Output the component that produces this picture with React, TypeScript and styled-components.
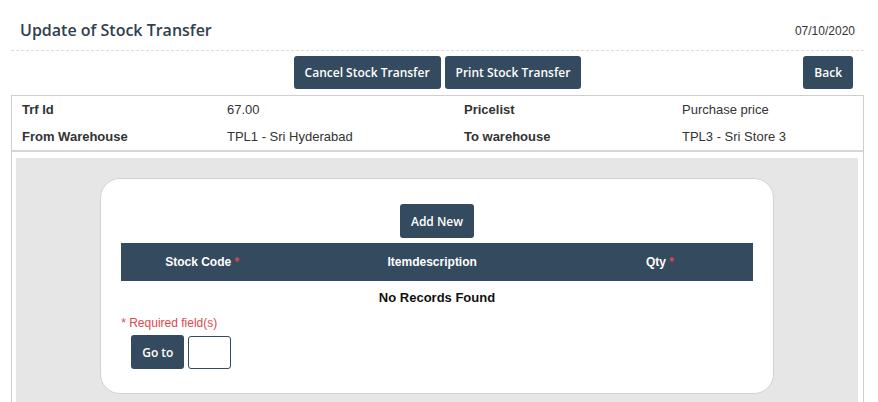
import React from "react";
import styled, { createGlobalStyle } from "styled-components";

const GlobalStyle = createGlobalStyle`
  html, body { margin: 0; padding: 0; background: #fff; }
  body { font-family: "Liberation Sans", Arial, sans-serif; color: #333; }
  * { box-sizing: border-box; }
`;

const slate = "#344a5e";

const Page = styled.div`
  padding: 0 14px 0 11px;
`;

const Header = styled.div`
  display: flex;
  align-items: flex-end;
  justify-content: space-between;
  height: 51px;
  padding: 0 9px 10px 9px;
  border-bottom: 1px dashed #dcdcdc;
`;

const Title = styled.h1`
  margin: 0;
  font-family: "Open Sans", sans-serif;
  font-weight: 600;
  font-size: 16px;
  line-height: 20px;
  color: #2f3f50;
`;

const DateText = styled.span`
  font-family: "Liberation Sans", Arial, sans-serif;
  font-size: 12px;
  line-height: 16px;
  color: #333;
  margin-bottom: 1px;
`;

const Toolbar = styled.div`
  display: grid;
  grid-template-columns: 1fr auto 1fr;
  align-items: center;
  margin-top: 5px;
  margin-bottom: 6px;
`;

const ButtonGroup = styled.div`
  grid-column: 2;
  display: flex;
  gap: 4px;
`;

const RightSlot = styled.div`
  grid-column: 3;
  display: flex;
  justify-content: flex-end;
  padding-right: 11px;
`;

const Button = styled.button<{ $h?: number }>`
  height: ${(p) => p.$h ?? 33}px;
  padding: 0 11px;
  background: ${slate};
  color: #fff;
  border: none;
  border-radius: 3px;
  font-family: "Open Sans", sans-serif;
  font-weight: 600;
  font-size: 12px;
  cursor: pointer;
  white-space: nowrap;
`;

const Container = styled.div`
  border: 1px solid #cfcfcf;
  border-bottom: none;
`;

const InfoGrid = styled.div`
  display: grid;
  grid-template-columns: 205px 237px 218px 1fr;
  grid-auto-rows: 27px;
  align-items: center;
  padding-left: 10px;
  border-bottom: 2px solid #d6d6d6;
`;

const Label = styled.div`
  font-weight: 700;
  font-size: 13px;
  color: #333;
`;

const Value = styled.div`
  font-size: 13px;
  color: #333;
`;

const Body = styled.div`
  padding: 6px 5px 0 4px;
`;

const Panel = styled.div`
  background: #e6e6e6;
  padding: 20px 0 20px;
`;

const Card = styled.div`
  width: 80%;
  margin: 0 auto;
  background: #fff;
  border: 1px solid #d3d3d3;
  border-radius: 20px;
  padding: 25px 20px 24px;
`;

const Center = styled.div`
  display: flex;
  justify-content: center;
  margin-bottom: 5px;
`;

const TableHead = styled.div`
  display: grid;
  grid-template-columns: 162px 298px 1fr;
  height: 38px;
  align-items: center;
  background: ${slate};
`;

const HeadCell = styled.div<{ $pr?: number }>`
  text-align: center;
  color: #fff;
  font-weight: 700;
  font-size: 12px;
  padding-right: ${(p) => p.$pr ?? 0}px;
`;

const Req = styled.span`
  color: #e0464b;
`;

const NoRecords = styled.div`
  text-align: center;
  font-weight: 700;
  font-size: 13px;
  line-height: 34px;
  color: #111;
`;

const RequiredNote = styled.div`
  margin-top: 1px;
  font-size: 12px;
  line-height: 14px;
  color: #e0464b;
`;

const GoToRow = styled.div`
  display: flex;
  align-items: center;
  gap: 4px;
  margin-top: 5px;
  padding-left: 10px;
`;

const PageInput = styled.input`
  width: 43px;
  height: 33px;
  margin-top: 1px;
  border: 1px solid ${slate};
  border-radius: 3px;
  padding: 0 4px;
  font-size: 13px;
  outline: none;
`;

export default function App() {
  return (
    <>
      <GlobalStyle />
      <Page>
        <Header>
          <Title>Update of Stock Transfer</Title>
          <DateText>07/10/2020</DateText>
        </Header>
        <Toolbar>
          <ButtonGroup>
            <Button>Cancel Stock Transfer</Button>
            <Button>Print Stock Transfer</Button>
          </ButtonGroup>
          <RightSlot>
            <Button>Back</Button>
          </RightSlot>
        </Toolbar>
        <Container>
          <InfoGrid>
            <Label>Trf Id</Label>
            <Value>67.00</Value>
            <Label>Pricelist</Label>
            <Value>Purchase price</Value>
            <Label>From Warehouse</Label>
            <Value>TPL1 - Sri Hyderabad</Value>
            <Label>To warehouse</Label>
            <Value>TPL3 - Sri Store 3</Value>
          </InfoGrid>
          <Body>
            <Panel>
              <Card>
                <Center>
                  <Button $h={34}>Add New</Button>
                </Center>
                <TableHead>
                  <HeadCell>
                    Stock Code <Req>*</Req>
                  </HeadCell>
                  <HeadCell>Itemdescription</HeadCell>
                  <HeadCell $pr={14}>
                    Qty <Req>*</Req>
                  </HeadCell>
                </TableHead>
                <NoRecords>No Records Found</NoRecords>
                <RequiredNote>* Required field(s)</RequiredNote>
                <GoToRow>
                  <Button $h={34}>Go to</Button>
                  <PageInput type="text" />
                </GoToRow>
              </Card>
            </Panel>
          </Body>
        </Container>
      </Page>
    </>
  );
}
